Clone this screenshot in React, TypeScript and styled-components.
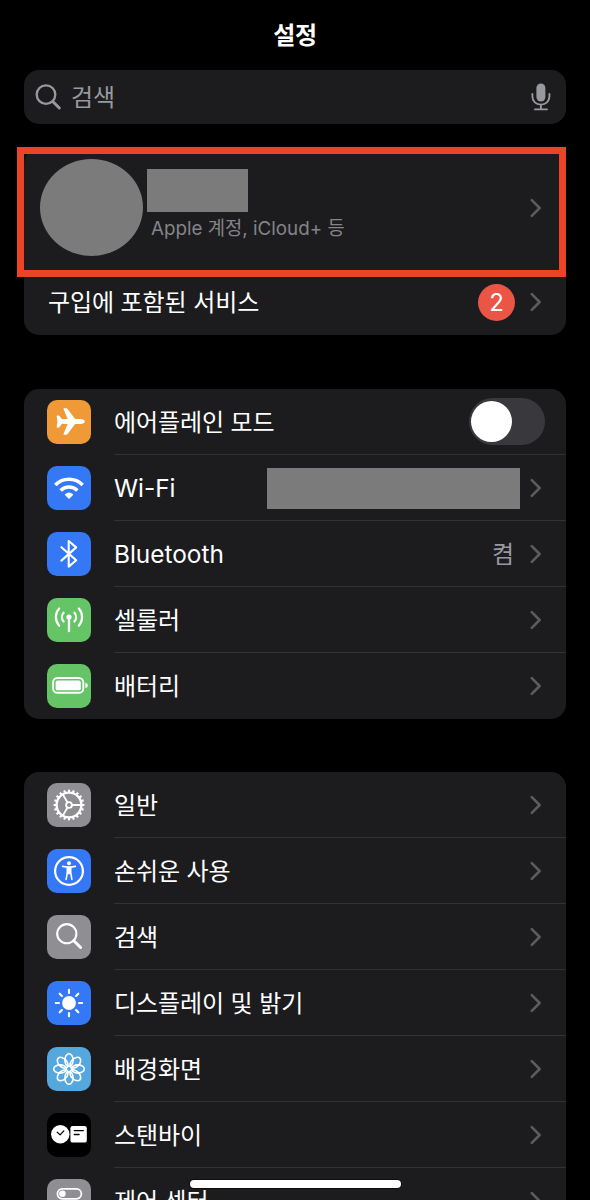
import React from "react";
import styled, { createGlobalStyle } from "styled-components";

const GlobalStyle = createGlobalStyle`
  * { box-sizing: border-box; }
  html, body { margin: 0; background: #000; }
  body { overflow: hidden; }
`;

const Screen = styled.main`
  position: relative;
  width: 590px;
  height: 1200px;
  overflow: hidden;
  padding: 0 24px;
  display: flex;
  flex-direction: column;
  background: #000;
  color: #fff;
  font-family: Inter, "Noto Sans CJK KR", sans-serif;
  font-size: 24px;
`;

const Title = styled.h1`
  margin: 0;
  height: 70px;
  flex: none;
  display: flex;
  align-items: center;
  justify-content: center;
  padding-bottom: 3px;
  font-size: 24px;
  font-weight: 700;
  letter-spacing: -0.3px;
`;

const SearchBar = styled.div`
  height: 54px;
  flex: none;
  display: flex;
  align-items: center;
  padding: 0 14px 0 10px;
  border-radius: 15px;
  background: #1c1c1e;
  color: #98989f;
`;

const SearchText = styled.span`
  flex: 1;
  margin-left: 9px;
  padding-bottom: 4px;
`;

const Card = styled.section<{ $top: number }>`
  position: relative;
  flex: none;
  margin-top: ${(p) => p.$top}px;
  border-radius: 15px;
  background: #1c1c1e;
`;

const Highlight = styled.div`
  position: absolute;
  left: -7px;
  top: -1px;
  width: 549px;
  height: 130px;
  border: 7px solid #eb4427;
`;

const ProfileRow = styled.div`
  height: 121px;
  display: flex;
  align-items: flex-start;
  padding: 11px 24px 0 16px;
`;

const Avatar = styled.div`
  width: 103px;
  height: 97px;
  border-radius: 50%;
  background: #7b7b7b;
`;

const ProfileText = styled.div`
  flex: 1;
  margin: 10px 0 0 4px;
`;

const NameBlock = styled.div`
  width: 101px;
  height: 43px;
  background: #7b7b7b;
`;

const Subtitle = styled.div`
  margin: 3px 0 0 4px;
  font-size: 18.8px;
  line-height: 28px;
  color: #848489;
  white-space: nowrap;
`;

const ChevronSlot = styled.div`
  align-self: center;
  margin-top: -12px;
  display: flex;
`;

const Row = styled.div`
  height: 66px;
  display: flex;
  align-items: center;
  padding-left: 23px;
`;

const RowBody = styled.div<{ $divided?: boolean; $inset?: number }>`
  flex: 1;
  height: 66px;
  margin-left: ${(p) => p.$inset ?? 23}px;
  padding-right: 24px;
  display: flex;
  align-items: center;
  border-bottom: ${(p) => (p.$divided ? "1px solid #323235" : "0 solid transparent")};
`;

const Label = styled.span<{ $latin?: boolean }>`
  flex: 1;
  white-space: nowrap;
  font-size: ${(p) => (p.$latin ? 24.4 : 24)}px;
  letter-spacing: ${(p) => (p.$latin ? 0 : -0.1)}px;
  padding-bottom: ${(p) => (p.$latin ? 0 : 3)}px;
`;

const Tile = styled.div<{ $color: string }>`
  width: 44px;
  height: 44px;
  flex: none;
  border-radius: 10px;
  background: ${(p) => p.$color};
  svg { display: block; }
`;

const Badge = styled.span`
  width: 37px;
  height: 37px;
  margin-right: 15px;
  border-radius: 50%;
  background: #eb5545;
  display: flex;
  align-items: center;
  justify-content: center;
  padding-top: 1px;
`;

const Value = styled.span`
  margin-right: 16px;
  padding-bottom: 3px;
  color: #98989f;
`;

const NetworkBlock = styled.span`
  width: 253px;
  height: 41px;
  margin: 1px 10px 0 0;
  background: #7b7b7b;
`;

const Switch = styled.span`
  width: 76px;
  height: 47px;
  margin-right: -3px;
  padding: 3px 3px 3px 2px;
  border-radius: 24px;
  background: #39393d;
`;

const Knob = styled.span`
  display: block;
  width: 41px;
  height: 41px;
  border-radius: 50%;
  background: #fff;
`;

const HomeIndicator = styled.div`
  position: absolute;
  left: 190px;
  top: 1180px;
  width: 211px;
  height: 8px;
  border-radius: 4px;
  background: #fff;
  box-shadow: 0 0 0 1px #0008;
`;

const Chevron = () => (
  <svg width="12" height="20" viewBox="0 0 12 20" fill="none">
    <path d="M1.8 2.2 L9.6 10 L1.8 17.8" stroke="#5b5b60" strokeWidth="2.6" strokeLinecap="round" strokeLinejoin="round" />
  </svg>
);

const Glyph = ({ children }: { children: React.ReactNode }) => (
  <svg width="44" height="44" viewBox="0 0 44 44" fill="none" stroke="#fff" strokeLinecap="round" strokeLinejoin="round">
    {children}
  </svg>
);

const turns = (n: number) => Array.from({ length: n }, (_, i) => (i * 360) / n);

const Plane = () => (
  <Glyph>
    <path
      fill="#fff"
      stroke="none"
      d="M37.8 21.5c0-1.5-1.8-2.5-4.3-2.5h-5.4L20.6 9q-.5-.7-1.3-.7h-2.2q-.9 0-.5 1l4 9.7-5.6.3-2.5-3.3q-.4-.5-1-.5h-1.3q-.6 0-.5.7l.7 5.3-.7 5.3q-.1.7.5.7h1.3q.6 0 1-.5l2.5-3.3 5.6.3-4 9.7q-.4 1 .5 1h2.2q.8 0 1.3-.7l7.5-10h5.4c2.5 0 4.3-1 4.3-2.5z"
    />
  </Glyph>
);

const Wifi = () => (
  <Glyph>
    <g strokeWidth="3.5" strokeLinecap="butt">
      <path d="M8.3 19a19.4 19.4 0 0 1 27.4 0" />
      <path d="M13.6 24.4a11.8 11.8 0 0 1 16.8 0" />
    </g>
    <path d="M18 28.2a6.2 6.2 0 0 1 8 0q.5.4 0 .9l-3.4 3.4q-.6.6-1.2 0L18 29.1q-.5-.5 0-.9z" fill="#fff" stroke="none" />
  </Glyph>
);

const Bluetooth = () => (
  <Glyph>
    <path d="M14.4 15.2 29.2 28.2 21.7 34.6V9l7.5 6.4L14.4 28.6" strokeWidth="2.1" />
  </Glyph>
);

const Cellular = () => (
  <Glyph>
    <circle cx="22" cy="19" r="2.6" fill="#fff" stroke="none" />
    <path d="M22 19v14.2" strokeWidth="2.3" />
    <g strokeWidth="2.2">
      <path d="M16.6 14.7a6.6 6.6 0 0 0 0 8.8M27.4 14.7a6.6 6.6 0 0 1 0 8.8" />
      <path d="M12.2 10.5a12.8 12.8 0 0 0 0 17.2M31.8 10.5a12.8 12.8 0 0 1 0 17.2" />
    </g>
  </Glyph>
);

const Battery = () => (
  <Glyph>
    <rect x="6.1" y="14" width="30.2" height="14.8" rx="4.4" strokeWidth="1.9" />
    <rect x="8.6" y="16.5" width="25.2" height="9.8" rx="1.9" fill="#fff" stroke="none" />
    <path d="M38.3 18.7q2.6.6 2.6 2.7t-2.6 2.7z" fill="#fff" stroke="none" />
  </Glyph>
);

const Gear = () => (
  <Glyph>
    <circle cx="22" cy="22" r="12.4" strokeWidth="2.4" />
    <circle cx="22" cy="22" r="2.9" strokeWidth="1.9" />
    {turns(20).map((a) => (
      <path key={a} d="M35 22h2.4" strokeWidth="2.1" strokeLinecap="butt" transform={`rotate(${a} 22 22)`} />
    ))}
    {turns(3).map((a) => (
      <path key={a} d="M25 22h9" strokeWidth="1.9" transform={`rotate(${a} 22 22)`} />
    ))}
  </Glyph>
);

const Accessibility = () => (
  <Glyph>
    <circle cx="22" cy="22" r="13.9" strokeWidth="2.2" />
    <circle cx="22" cy="14.3" r="2" fill="#fff" stroke="none" />
    <path
      d="M15.6 17.4l4.6.7h3.6l4.6-.7M20.4 18.4v5l-1.3 7M23.6 18.4v5l1.3 7"
      strokeWidth="1.6"
    />
    <path d="M19.8 17.6h4.4v6.8l-1.2.8h-2l-1.2-.8z" fill="#fff" stroke="none" />
  </Glyph>
);

const Magnifier = () => (
  <Glyph>
    <circle cx="19.8" cy="18.7" r="9.6" strokeWidth="2.1" />
    <path d="M26.8 25.8l6.8 6.7" strokeWidth="3" />
  </Glyph>
);

const Sun = () => (
  <Glyph>
    <circle cx="22" cy="22" r="6.9" fill="#fff" stroke="none" />
    {turns(8).map((a) => (
      <path key={a} d="M32 22h3.2" strokeWidth="2.1" transform={`rotate(${a} 22 22)`} />
    ))}
  </Glyph>
);

const Flower = () => (
  <Glyph>
    {turns(8).map((a) => (
      <ellipse key={a} cx="22" cy="13.1" rx="4.1" ry="6.4" strokeWidth="1.6" transform={`rotate(${a} 22 22)`} />
    ))}
  </Glyph>
);

const StandBy = () => (
  <Glyph>
    <circle cx="13.3" cy="21.2" r="9.2" fill="#fff" stroke="none" />
    <path d="M10.2 19.1l2.9 2.8 3.7-4" stroke="#000" strokeWidth="1.3" />
    <rect x="23.4" y="13" width="16.4" height="16.6" rx="2.2" fill="#fff" stroke="none" />
    <path d="M27.3 17.6h9M27.3 21.5h4.8" stroke="#000" strokeWidth="1.3" />
  </Glyph>
);

const Controls = () => (
  <Glyph>
    <rect x="10.4" y="9.8" width="24" height="10" rx="5" strokeWidth="1.8" />
    <circle cx="15.4" cy="14.8" r="3.3" fill="#fff" stroke="none" />
    <rect x="9.6" y="24" width="25.6" height="11.4" rx="5.7" fill="#fff" stroke="none" />
    <circle cx="29.4" cy="29.7" r="3.8" fill="#8e8e93" stroke="none" />
  </Glyph>
);

const BLUE = "#3478f6";
const GREEN = "#65c466";
const GRAY = "#8e8e93";

type Item = {
  label: string;
  color: string;
  icon: React.ReactNode;
  latin?: boolean;
  trailing?: React.ReactNode;
};

const connectivity: Item[] = [
  {
    label: "에어플레인 모드",
    color: "#f09a37",
    icon: <Plane />,
    trailing: (
      <Switch>
        <Knob />
      </Switch>
    ),
  },
  { label: "Wi-Fi", latin: true, color: BLUE, icon: <Wifi />, trailing: <><NetworkBlock /><Chevron /></> },
  { label: "Bluetooth", latin: true, color: BLUE, icon: <Bluetooth />, trailing: <><Value>켬</Value><Chevron /></> },
  { label: "셀룰러", color: GREEN, icon: <Cellular /> },
  { label: "배터리", color: GREEN, icon: <Battery /> },
];

const general: Item[] = [
  { label: "일반", color: GRAY, icon: <Gear /> },
  { label: "손쉬운 사용", color: BLUE, icon: <Accessibility /> },
  { label: "검색", color: GRAY, icon: <Magnifier /> },
  { label: "디스플레이 및 밝기", color: BLUE, icon: <Sun /> },
  { label: "배경화면", color: "#55a8dd", icon: <Flower /> },
  { label: "스탠바이", color: "#000", icon: <StandBy /> },
  { label: "제어 센터", color: GRAY, icon: <Controls /> },
];

const Rows = ({ items }: { items: Item[] }) => (
  <>
    {items.map((item, i) => (
      <Row key={item.label}>
        <Tile $color={item.color}>{item.icon}</Tile>
        <RowBody $divided={i < items.length - 1}>
          <Label $latin={item.latin}>{item.label}</Label>
          {item.trailing ?? <Chevron />}
        </RowBody>
      </Row>
    ))}
  </>
);

export default function App() {
  return (
    <Screen>
      <GlobalStyle />
      <Title>설정</Title>
      <SearchBar>
        <svg width="28" height="28" viewBox="0 0 28 28" fill="none" stroke="currentColor" strokeLinecap="round">
          <circle cx="12" cy="11.6" r="9.3" strokeWidth="2.3" />
          <path d="M19 18.7l6.3 6.3" strokeWidth="3" />
        </svg>
        <SearchText>검색</SearchText>
        <svg width="22" height="28" viewBox="0 0 22 28" fill="none" stroke="currentColor" strokeLinecap="round">
          <rect x="6.4" y="0.4" width="9" height="18.2" rx="4.5" fill="currentColor" stroke="none" />
          <path d="M2.4 11v2.6c0 4.8 3.6 8 8.5 8s8.5-3.2 8.5-8V11M10.9 21.6v4.4M5 26.4h12" strokeWidth="1.9" />
        </svg>
      </SearchBar>

      <Card $top={24}>
        <ProfileRow>
          <Avatar />
          <ProfileText>
            <NameBlock />
            <Subtitle>Apple 계정, iCloud+ 등</Subtitle>
          </ProfileText>
          <ChevronSlot>
            <Chevron />
          </ChevronSlot>
        </ProfileRow>
        <Row>
          <RowBody $inset={1}>
            <Label>구입에 포함된 서비스</Label>
            <Badge>2</Badge>
            <Chevron />
          </RowBody>
        </Row>
        <Highlight />
      </Card>

      <Card $top={54}>
        <Rows items={connectivity} />
      </Card>

      <Card $top={53}>
        <Rows items={general} />
      </Card>

      <HomeIndicator />
    </Screen>
  );
}
